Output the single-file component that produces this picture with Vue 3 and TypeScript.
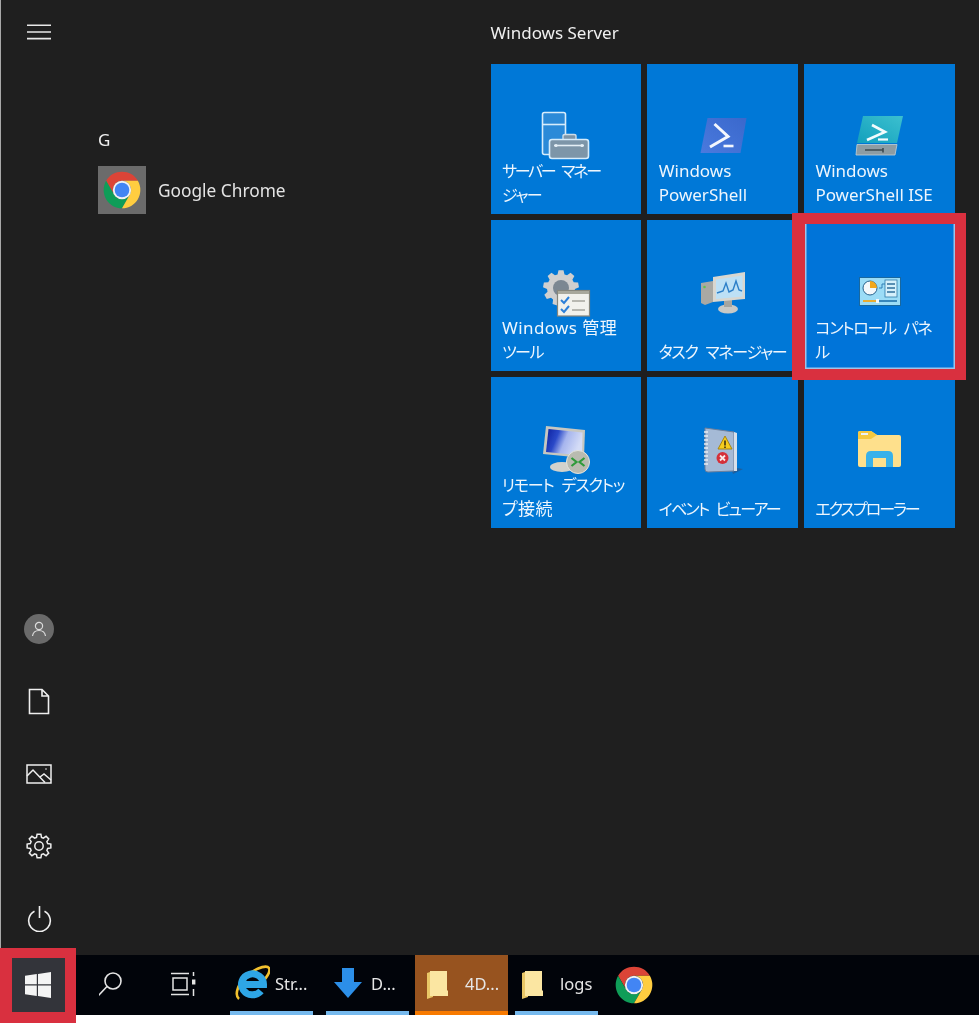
<template>
  <div class="screen">
    <!-- shared symbols -->
    <svg class="defs" width="0" height="0">
      <defs>
        <linearGradient id="rdpScreen" x1="0" y1="0" x2="1" y2="0.3">
          <stop offset="0" stop-color="#0c1f9e" />
          <stop offset="0.35" stop-color="#2a49c8" />
          <stop offset="0.6" stop-color="#a6b5ee" />
          <stop offset="1" stop-color="#d4dcf6" />
        </linearGradient>
        <linearGradient id="psFill" x1="0" y1="1" x2="1" y2="0">
          <stop offset="0" stop-color="#4a7ade" />
          <stop offset="1" stop-color="#3a68cc" />
        </linearGradient>
        <linearGradient id="iseFill" x1="0" y1="1" x2="1" y2="0">
          <stop offset="0" stop-color="#12a0bd" />
          <stop offset="1" stop-color="#3cc0cf" />
        </linearGradient>
      </defs>
      <symbol id="chrome" viewBox="0 0 48 48">
        <path fill="#db4437" d="M41.32 14A20 20 0 0 0 6.68 14L15.34 29A10 10 0 0 1 24 14Z" />
        <path fill="#0f9d58" d="M6.68 14A20 20 0 0 0 24 44L32.66 29A10 10 0 0 1 15.34 29Z" />
        <path fill="#ffcd40" d="M24 44A20 20 0 0 0 41.32 14H24A10 10 0 0 1 32.66 29Z" />
        <circle cx="24" cy="24" r="10" fill="#f1f1f1" />
        <circle cx="24" cy="24" r="8" fill="#4285f4" />
      </symbol>
      <symbol id="barFolder" viewBox="0 0 36 36">
        <path fill="#e9c766" d="M3 8L6 7V31H9V32L3 34Z" />
        <path fill="#fbe6a2" d="M6 6H23V25L24 26V31H6Z" />
      </symbol>
    </svg>

    <div class="startArea">
      <!-- left rail -->
      <nav class="rail">
        <div class="railTop">
          <svg width="26" height="16" viewBox="0 0 26 16" stroke="#e8e8e8" stroke-width="1.6">
            <path d="M1 1.2H25M1 8H25M1 14.6H25" />
          </svg>
        </div>
        <div class="railBottom">
          <div class="railItem">
            <div class="avatar">
              <svg width="16" height="16" viewBox="0 0 16 16" fill="none" stroke="#dcdcdc" stroke-width="1.2">
                <circle cx="8" cy="5" r="3.6" />
                <path d="M1.5 15C2 11.5 4.5 9.5 8 9.5S14 11.5 14.5 15" />
              </svg>
            </div>
          </div>
          <div class="railItem">
            <svg width="22" height="27" viewBox="0 0 22 27" fill="none" stroke="#efefef" stroke-width="1.6">
              <path d="M1.5 1.5H14L20.5 8V25.5H1.5ZM14 1.5V8H20.5" />
            </svg>
          </div>
          <div class="railItem">
            <svg width="26" height="20" viewBox="0 0 26 20" fill="none" stroke="#efefef" stroke-width="1.5">
              <rect x="1" y="1" width="24" height="18" />
              <path d="M1 12L7 6L19 18.5M14 13L18 10L25 16" />
              <circle cx="20" cy="5" r=".8" fill="#efefef" stroke="none" />
            </svg>
          </div>
          <div class="railItem">
            <svg width="26" height="26" viewBox="0 0 26 26" fill="none" stroke="#efefef" stroke-width="1.5">
              <path :d="gearPath(13, 13, 12, 9, 8)" />
              <circle cx="13" cy="13" r="4.2" />
            </svg>
          </div>
          <div class="railItem">
            <svg width="25" height="27" viewBox="0 0 25 27" fill="none" stroke="#efefef" stroke-width="1.6">
              <path d="M12.5 1V13" />
              <path d="M7.5 6.2A10.8 10.8 0 1 0 17.5 6.2" />
            </svg>
          </div>
        </div>
      </nav>

      <!-- app list -->
      <section class="appList">
        <div class="groupLetter">G</div>
        <div class="appRow">
          <div class="appIcon">
            <svg width="44" height="44"><use href="#chrome" /></svg>
          </div>
          <span>Google Chrome</span>
        </div>
      </section>

      <!-- tiles -->
      <section class="tileArea">
        <div class="tileHeading">Windows Server</div>
        <div class="tileGrid">
          <div v-for="t in tiles" :key="t.icon" class="tile" :class="{ hovered: t.icon === 'control' }">
            <svg class="tileIcon" width="56" height="56" viewBox="0 0 56 56">
              <template v-if="t.icon === 'server'">
                <rect x="4.5" y="4.5" width="23" height="42" rx="2" fill="#2b8ad8" stroke="#d6ecfb" stroke-width="1.6" />
                <path d="M4.5 16.5H27.5" stroke="#d6ecfb" stroke-width="1.6" />
                <path d="M25 31V28Q25 26.5 27 26.5H36Q38 26.5 38 28V31" fill="#7d95a8" stroke="#cfdde8" stroke-width="1.4" />
                <rect x="11.5" y="31.5" width="39" height="19" rx="2.5" fill="#7d95a8" stroke="#d6ecfb" stroke-width="1.6" />
                <path d="M16 37.5H46" stroke="#e4eef5" stroke-width="1.6" />
                <circle cx="18" cy="37.5" r="1.6" fill="#e4eef5" />
                <circle cx="44" cy="37.5" r="1.6" fill="#e4eef5" />
              </template>
              <template v-else-if="t.icon === 'ps'">
                <path d="M12.5 10H51.5L45.5 45H5.5Z" fill="url(#psFill)" />
                <path d="M19.5 16L33 28.5L15 39" fill="none" stroke="#f4f7fd" stroke-width="3" />
                <path d="M28.5 38H38.5" stroke="#f4f7fd" stroke-width="2.6" />
              </template>
              <template v-else-if="t.icon === 'ise'">
                <path d="M12 8H52L46 35H6Z" fill="url(#iseFill)" />
                <path d="M21 17L34 24L16 32" fill="none" stroke="#f2fbfd" stroke-width="2.6" />
                <path d="M27 31.5H37" stroke="#f2fbfd" stroke-width="2.2" />
                <path d="M6 36.5H46L44 47H5Z" fill="#8d9ca3" stroke="#c5d0d4" stroke-width=".8" />
                <path d="M14 42H32M32 40V44.5" stroke="#3d4a50" stroke-width="1.6" />
              </template>
              <template v-else-if="t.icon === 'admin'">
                <path :d="gearPath(23, 24, 18, 14, 9)" fill="#cfcfcf" />
                <circle cx="23" cy="24" r="8" fill="#7b8792" />
                <rect x="19.5" y="26.5" width="32" height="25.5" fill="#f1f1ec" stroke="#86867c" stroke-width="1.2" />
                <path d="M20 27H51V30H20Z" fill="#a8a89c" />
                <path d="M23 36L26 39L31 33M23 45L26 48L31 42" fill="none" stroke="#2d80d8" stroke-width="2" />
                <path d="M34 37H47M34 46H47" stroke="#a4a49c" stroke-width="1.4" />
              </template>
              <template v-else-if="t.icon === 'taskmgr'">
                <path d="M6 19L18 17V38L10 41L6 39Z" fill="#a9a9a4" />
                <circle cx="9.5" cy="23" r="1.3" fill="#63c050" />
                <ellipse cx="33" cy="45" rx="10" ry="4.5" fill="#c9c9c5" />
                <path d="M29 36H37V43H29Z" fill="#a5a5a0" />
                <path d="M18 13L50 8V35L18 38Z" fill="#d9d7d0" />
                <path d="M21 15.5L47.5 11.5V32.5L21 35Z" fill="#bde0f5" />
                <path d="M22 29L28 27L31 19L34 28L38 26L41 17L44 26L47 27" fill="none" stroke="#2d7fc8" stroke-width="1.4" />
              </template>
              <template v-else-if="t.icon === 'control'">
                <rect x="8" y="13" width="42" height="29" fill="#19689f" />
                <rect x="9" y="14" width="40" height="27" fill="#9bdcf6" />
                <circle cx="19" cy="24" r="7" fill="#f4f8fb" stroke="#27638e" stroke-width="1" />
                <path d="M19 24V17A7 7 0 0 1 26 24Z" fill="#f2a71c" />
                <rect x="34" y="16" width="12" height="17" fill="#d5f0fb" stroke="#2c7bab" stroke-width=".8" />
                <path d="M36 20H44M36 24H44M36 28H44" stroke="#2f6f9c" stroke-width="1.4" />
                <path d="M28 24H31V20H34" fill="none" stroke="#2f7fb5" stroke-width="1" />
                <path d="M12 37H26" stroke="#f2a71c" stroke-width="1.8" />
                <path d="M26 37H46" stroke="#2d7db5" stroke-width="1.8" />
                <rect x="25" y="35" width="3" height="4" fill="#f4f8fb" />
              </template>
              <template v-else-if="t.icon === 'rdp'">
                <ellipse cx="24" cy="46" rx="12" ry="5" fill="#d2d2cc" />
                <path d="M8 5L47 9L46 37L5 33Z" fill="#c7c7c0" />
                <path d="M10.5 8L44.5 11.5L44 34.5L8 31Z" fill="url(#rdpScreen)" />
                <circle cx="40" cy="41" r="11.5" fill="#b9bbb0" stroke="#e4e4de" stroke-width="1" />
                <path d="M33.5 37L38.5 41L33.5 45M46.5 37L41.5 41L46.5 45" fill="none" stroke="#2f9a3a" stroke-width="2.2" />
              </template>
              <template v-else-if="t.icon === 'event'">
                <path d="M36 46L48 48L38 53Z" fill="#1d5f9e" />
                <path d="M10 7L39 11V50L13 51Q10 51 10 48Z" fill="#a5bad6" stroke="#6d7f9b" stroke-width="1" />
                <path d="M39 11L42 12V50L39 50Z" fill="#d8e0ea" />
                <path d="M9 11H13M9 15H13M9 19H13M9 23H13M9 27H13M9 31H13M9 35H13M9 39H13M9 43H13" stroke="#e9edf2" stroke-width="1.6" />
                <path d="M30 15L37 28H23Z" fill="#f4cc1c" stroke="#a88512" stroke-width="1" />
                <path d="M30 19.5V24.5M30 25.5V27" stroke="#3a3010" stroke-width="1.6" />
                <circle cx="27.5" cy="37" r="6" fill="#d5303a" />
                <path d="M25 34.5L30 39.5M30 34.5L25 39.5" stroke="#fbeaea" stroke-width="1.8" />
              </template>
              <template v-else-if="t.icon === 'explorer'">
                <path d="M7 12Q7 10 9 10H20L26 14H48Q50 14 50 16V44Q50 46 48 46H9Q7 46 7 44Z" fill="#fee08c" />
                <path d="M7 12Q7 10 9 10H20L26 14L20 18H7Z" fill="#f5c93f" />
                <rect x="10" y="12" width="7" height="2" fill="#e9f2f7" />
                <path d="M15 46V35Q15 30 20 30H37Q42 30 42 35V46H35V37H22V46Z" fill="#38b1ea" />
                <rect x="22" y="37" width="13" height="9" fill="#fee08c" />
              </template>
            </svg>
            <div class="tileLabel">
              <div
                v-for="[text, tracking] in t.lines"
                :key="text"
                :class="{ kana: tracking < 0 }"
                :style="{ letterSpacing: tracking + 'px' }"
              >{{ text }}</div>
            </div>
          </div>
        </div>
      </section>
    </div>

    <!-- taskbar -->
    <footer class="taskbar">
      <div class="startBtn">
        <svg width="26" height="26" viewBox="0 0 26 26" fill="#f4f4f4">
          <path d="M0 3.8L11.8 2.1V12.3H0ZM13 1.9L26 0V12.3H13ZM0 13.6H11.8V23.9L0 22.2ZM13 13.6H26V26L13 24.1Z" />
        </svg>
      </div>
      <div class="barCell">
        <svg width="26" height="26" viewBox="1.5 0 26 26" fill="none" stroke="#e4e4e4" stroke-width="1.6">
          <circle cx="15.5" cy="10" r="8" />
          <path d="M9.5 15.5L1 24.5" />
        </svg>
      </div>
      <div class="barCell">
        <svg width="26" height="26" viewBox="0 0 26 26" fill="none" stroke="#e4e4e4" stroke-width="1.5">
          <rect x="2" y="7" width="14" height="12" />
          <path d="M0 2.5H18M0 23.5H18" />
          <path d="M22.5 1V5M22.5 18V25" />
          <rect x="21" y="8.5" width="3.4" height="5" fill="#e4e4e4" stroke="none" />
        </svg>
      </div>

      <div class="barApp ieApp">
        <svg width="36" height="36" viewBox="0 0 36 36">
          <path d="M5 34C0 30 4 16 16 8C25 2 33 0 35 3C37 7 33 11 31 14" fill="none" stroke="#f2c12e" stroke-width="2.6" />
          <path d="M9 19.5H29.5A11 10.5 0 1 0 27 26" fill="none" stroke="#2ea6e6" stroke-width="7" />
        </svg>
        <span>Str...</span>
      </div>
      <div class="barApp downApp">
        <svg width="36" height="36" viewBox="0 0 36 36" fill="#2c8fe8">
          <path d="M12 3H24V17H32L18 33L4 17H12Z" />
        </svg>
        <span>D...</span>
      </div>
      <div class="barApp activeApp">
        <svg width="36" height="36"><use href="#barFolder" /></svg>
        <span>4D...</span>
      </div>
      <div class="barApp">
        <svg width="36" height="36"><use href="#barFolder" /></svg>
        <span>logs</span>
      </div>
      <div class="barChrome">
        <svg width="44" height="44"><use href="#chrome" /></svg>
      </div>
    </footer>
    <div class="bottomStrip"></div>

    <!-- red callout frames -->
    <div class="callout calloutTile"></div>
    <div class="callout calloutStart"></div>
  </div>
</template>

<script setup lang="ts">
type TileIcon = "server" | "ps" | "ise" | "admin" | "taskmgr" | "control" | "rdp" | "event" | "explorer";

// [text, tracking]: kana in the original UI font runs narrower than Noto's
const tiles: { icon: TileIcon; lines: [string, number][] }[] = [
  { icon: "server", lines: [["サーバー マネー", -2.3], ["ジャー", -1.5]] },
  { icon: "ps", lines: [["Windows", 0], ["PowerShell", 0]] },
  { icon: "ise", lines: [["Windows", 0], ["PowerShell ISE", 0]] },
  { icon: "admin", lines: [["Windows 管理", 0.4], ["ツール", -1.5]] },
  { icon: "taskmgr", lines: [["タスク マネージャー", -1.3]] },
  { icon: "control", lines: [["コントロール パネ", -1.3], ["ル", -1]] },
  { icon: "rdp", lines: [["リモート デスクトッ", -1.2], ["プ接続", 0.4]] },
  { icon: "event", lines: [["イベント ビューアー", -1.8]] },
  { icon: "explorer", lines: [["エクスプローラー", -2]] },
];

// Toothed ring used by the settings and admin tools icons
function gearPath(cx: number, cy: number, outer: number, inner: number, teeth: number) {
  const step = (Math.PI * 2) / teeth;
  const pts: string[] = [];
  for (let i = 0; i < teeth; i++) {
    const a = i * step - Math.PI / 2;
    const corners: [number, number][] = [
      [inner, a - step * 0.36],
      [outer, a - step * 0.2],
      [outer, a + step * 0.2],
      [inner, a + step * 0.36],
    ];
    for (const [r, t] of corners) {
      pts.push(`${(cx + r * Math.cos(t)).toFixed(2)} ${(cy + r * Math.sin(t)).toFixed(2)}`);
    }
  }
  return `M${pts.join("L")}Z`;
}
</script>

<style>
html,
body {
  margin: 0;
  background: #fff;
}
</style>

<style scoped>
.screen {
  position: relative;
  width: 979px;
  height: 1024px;
  overflow: hidden;
  display: flex;
  flex-direction: column;
  background: #fff;
  font-family: "Noto Sans", "Noto Sans CJK JP", sans-serif;
  font-feature-settings: "palt";
  color: #f0f0f0;
  filter: blur(0.4px);
}

.defs {
  position: absolute;
}

.startArea {
  display: flex;
  height: 955px;
  background: #1f1f1f;
  border-left: 1.5px solid #a8a8a8;
  box-sizing: border-box;
}

/* ---- Left rail ---- */
.rail {
  width: 76px;
  flex: none;
  display: flex;
  flex-direction: column;
  justify-content: space-between;
}

.railTop {
  height: 64px;
  display: flex;
  align-items: center;
  justify-content: center;
}

.railItem {
  height: 72.5px;
  display: flex;
  align-items: center;
  justify-content: center;
}

.avatar {
  width: 30px;
  height: 30px;
  border-radius: 50%;
  background: #6a6a6a;
  display: flex;
  align-items: center;
  justify-content: center;
}

/* ---- App list ---- */
.appList {
  width: 413.5px;
  flex: none;
  box-sizing: border-box;
  padding: 128px 0 0 21px;
}

.groupLetter {
  font-size: 17px;
  line-height: 24px;
  margin-bottom: 14px;
}

.appRow {
  display: flex;
  align-items: center;
  gap: 12px;
  font-size: 17.3px;
  color: #e4e4e4;
}

.appIcon {
  width: 48px;
  height: 48px;
  background: #6b6b6b;
  display: flex;
  align-items: center;
  justify-content: center;
}

/* ---- Tiles ---- */
.tileHeading {
  padding-top: 21px;
  margin-bottom: 18.5px;
  font-size: 17px;
  line-height: 24px;
}

.tileGrid {
  display: grid;
  grid-template-columns: repeat(3, 150.8px);
  grid-auto-rows: 150.8px;
  gap: 5.9px;
}

.tile {
  box-sizing: border-box;
  background: #0078d7;
  display: flex;
  flex-direction: column;
  align-items: center;
  padding-top: 44px;
  color: #eef6fd;
}

.tile.hovered {
  background: #0074d9;
}

/* the icon slot runs a few px into the label block */
.tileIcon {
  flex: none;
  margin-bottom: -8px;
}

.tileLabel {
  align-self: stretch;
  margin-top: auto;
  padding: 0 0 7px 11.5px;
  font-size: 17px;
  line-height: 24px;
  white-space: nowrap;
}

.kana {
  font-size: 16px;
  word-spacing: 5px;
}

/* ---- Taskbar ---- */
.taskbar {
  height: 60px;
  flex: none;
  display: flex;
  background: #01040a;
  color: #e6e6e6;
  font-size: 16.5px;
}

.startBtn {
  width: 76px;
  flex: none;
  background: #33343a;
  display: flex;
  align-items: center;
  justify-content: center;
}

.barCell {
  width: 72px;
  flex: none;
  display: flex;
  align-items: center;
  justify-content: center;
  padding-bottom: 2px;
  box-sizing: border-box;
}

.barApp {
  width: 83px;
  flex: none;
  box-sizing: border-box;
  display: flex;
  align-items: center;
  gap: 5px;
  padding: 0 0 0 4px;
  margin-right: 7px;
  border-bottom: 4px solid #76b9ed;
}

.ieApp {
  margin-left: 10px;
  margin-right: 13px;
}

.downApp {
  margin-right: 6px;
}

.activeApp {
  width: 93px;
  padding-left: 9px;
  background: #97531f;
  border-bottom-color: #f77a00;
}

.barChrome {
  margin-left: 7px;
  display: flex;
  align-items: center;
}

.bottomStrip {
  flex: 1;
  background: #fff;
}

/* ---- Red callouts ---- */
.callout {
  position: absolute;
  box-sizing: border-box;
  border: 11px solid #d9303f;
  pointer-events: none;
}

.calloutTile {
  left: 792px;
  top: 213px;
  width: 174px;
  height: 167px;
  border-left-width: 13px;
  /* hover outline of the tile, showing inside the frame */
  box-shadow:
    inset 1.5px 0 #9cc4ec,
    inset -1.5px 0 #9cc4ec,
    inset 0 -1.5px #9cc4ec;
}

.calloutStart {
  left: 0;
  top: 948px;
  width: 76px;
  height: 75px;
  border-left-width: 12px;
  border-top-width: 10px;
  border-bottom-width: 11px;
}
</style>
